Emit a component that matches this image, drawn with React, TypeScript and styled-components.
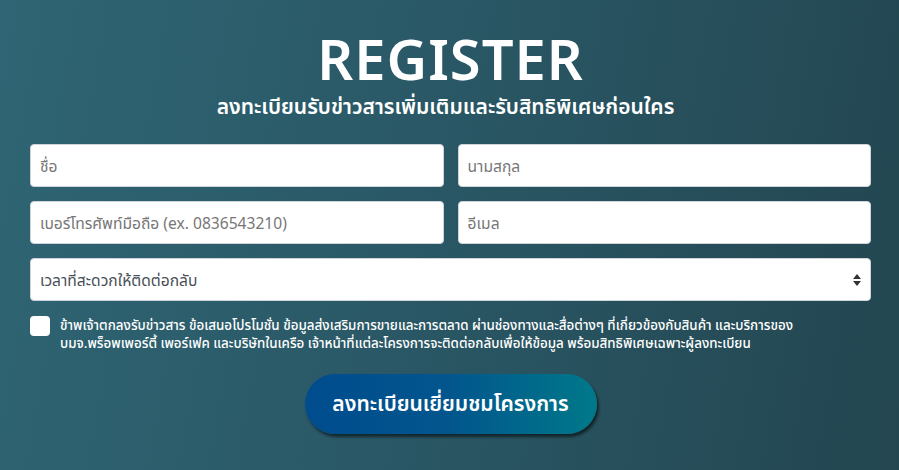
import styled, { createGlobalStyle } from "styled-components"

const GlobalStyle = createGlobalStyle`
  html, body {
    margin: 0;
    padding: 0;
  }
  body {
    font-family: "Noto Sans", "Noto Sans Thai", sans-serif;
  }
`

const Page = styled.div`
  width: 899px;
  height: 470px;
  box-sizing: border-box;
  background: linear-gradient(100deg, #2f6574 0%, #2a5866 45%, #234650 100%);
  padding: 26px 28px 0 30px;
  color: #fff;
  overflow: hidden;
`

const Header = styled.div`
  display: flex;
  flex-direction: column;
  align-items: center;
`

const Title = styled.h1`
  margin: 0;
  font-family: "Noto Sans", sans-serif;
  font-weight: 600;
  font-size: 56px;
  line-height: 64px;
  letter-spacing: 1px;
`

const Subtitle = styled.h2`
  margin: 2px 10px 0 0;
  font-weight: 600;
  font-size: 21px;
  line-height: 28px;
`

const Form = styled.form`
  margin-top: 24px;
  display: grid;
  grid-template-columns: 1fr 1fr;
  column-gap: 14px;
  row-gap: 14px;
`

const Field = styled.input`
  height: 43px;
  box-sizing: border-box;
  border: 1px solid #ced4da;
  border-radius: 4px;
  background: #fff;
  padding: 0 9px;
  font-family: inherit;
  font-size: 15.6px;
  color: #333;
  &::placeholder {
    color: #777;
  }
`

const SelectWrap = styled.div`
  grid-column: 1 / span 2;
  position: relative;
`

const Select = styled.select`
  width: 100%;
  height: 43px;
  box-sizing: border-box;
  appearance: none;
  border: 1px solid #ced4da;
  border-radius: 4px;
  background: #fff;
  padding: 0 9px;
  font-family: inherit;
  font-size: 15.6px;
  font-weight: 400;
  color: #495057;
`

const Arrows = styled.svg`
  position: absolute;
  right: 10px;
  top: 16px;
  pointer-events: none;
`

const Consent = styled.label`
  grid-column: 1 / span 2;
  display: flex;
  align-items: flex-start;
  gap: 10px;
`

const Box = styled.span`
  flex: none;
  width: 20px;
  height: 20px;
  border-radius: 4px;
  background: #fff;
  margin-top: 1px;
`

const ConsentText = styled.span`
  padding-top: 1px;
  font-size: 13.4px;
  line-height: 18px;
  font-weight: 500;
  color: #fff;
`

const Actions = styled.div`
  grid-column: 1 / span 2;
  display: flex;
  justify-content: center;
  margin-top: 8px;
`

const Submit = styled.button`
  width: 292px;
  height: 60px;
  border: none;
  border-radius: 30px;
  background: linear-gradient(90deg, #004c8e 0%, #02568d 50%, #00798a 100%);
  box-shadow: 2px 3px 3px rgba(0, 0, 0, 0.55);
  color: #fff;
  font-family: inherit;
  font-size: 21px;
  font-weight: 600;
  cursor: pointer;
`

export default function App() {
  return (
    <Page>
      <GlobalStyle />
      <Header>
        <Title>REGISTER</Title>
        <Subtitle>ลงทะเบียนรับข่าวสารเพิ่มเติมและรับสิทธิพิเศษก่อนใคร</Subtitle>
      </Header>
      <Form onSubmit={(e) => e.preventDefault()}>
        <Field placeholder="ชื่อ" />
        <Field placeholder="นามสกุล" />
        <Field placeholder="เบอร์โทรศัพท์มือถือ (ex. 0836543210)" />
        <Field placeholder="อีเมล" />
        <SelectWrap>
          <Select defaultValue="">
            <option value="" disabled>
              เวลาที่สะดวกให้ติดต่อกลับ
            </option>
          </Select>
          <Arrows width="8" height="12" viewBox="0 0 8 12">
            <path d="M4 0 L8 5 H0 Z" fill="#333" />
            <path d="M0 7 H8 L4 12 Z" fill="#333" />
          </Arrows>
        </SelectWrap>
        <Consent>
          <Box />
          <ConsentText>
            ข้าพเจ้าตกลงรับข่าวสาร ข้อเสนอโปรโมชั่น ข้อมูลส่งเสริมการขายและการตลาด ผ่านช่องทางและสื่อต่างๆ ที่เกี่ยวข้องกับสินค้า และบริการของ
            <br />
            บมจ.พร็อพเพอร์ตี้ เพอร์เฟค และบริษัทในเครือ เจ้าหน้าที่แต่ละโครงการจะติดต่อกลับเพื่อให้ข้อมูล พร้อมสิทธิพิเศษเฉพาะผู้ลงทะเบียน
          </ConsentText>
        </Consent>
        <Actions>
          <Submit type="submit">ลงทะเบียนเยี่ยมชมโครงการ</Submit>
        </Actions>
      </Form>
    </Page>
  )
}
